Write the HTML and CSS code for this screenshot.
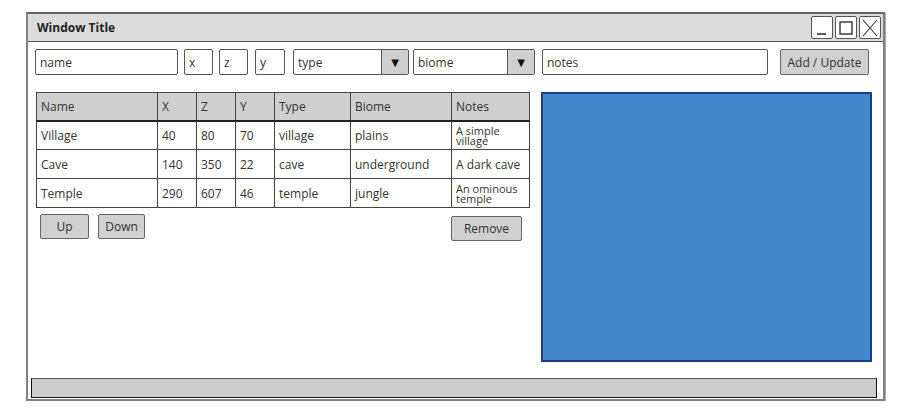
FILE: index.html
```html
<!DOCTYPE html>
<html>
<head>
<meta charset="utf-8">
<link rel="stylesheet" href="styles.css">
</head>
<body>
<div class="window">
  <div class="titlebar">
    <span class="title">Window Title</span>
    <div class="winbtns">
      <span class="wbtn"><svg width="20" height="20" viewBox="0 0 20 20"><path d="M5 16 H14" stroke="#333" stroke-width="1.6" fill="none"/></svg></span>
      <span class="wbtn"><svg width="20" height="20" viewBox="0 0 20 20"><rect x="4" y="4" width="12" height="12" stroke="#333" stroke-width="1.4" fill="none"/></svg></span>
      <span class="wbtn"><svg width="20" height="20" viewBox="0 0 20 20"><path d="M3 2 L17 18 M17 2 L3 18" stroke="#333" stroke-width="1.1" fill="none"/></svg></span>
    </div>
  </div>
  <div class="content">
    <div class="toolbar">
      <div class="field w-name">name</div>
      <div class="field w-small m6">x</div>
      <div class="field w-small m6">z</div>
      <div class="field w-y m7">y</div>
      <div class="select w-type m8"><span class="sel-text">type</span><span class="sel-arrow">▼</span></div>
      <div class="select w-biome m4"><span class="sel-text">biome</span><span class="sel-arrow">▼</span></div>
      <div class="field w-notes m7">notes</div>
      <div class="btn w-add m12">Add / Update</div>
    </div>
    <div class="main">
      <div class="leftcol">
        <table class="grid">
          <colgroup>
            <col style="width:121px"><col style="width:39px"><col style="width:39px"><col style="width:39px"><col style="width:76px"><col style="width:101px"><col style="width:78px">
          </colgroup>
          <thead>
            <tr><th>Name</th><th>X</th><th>Z</th><th>Y</th><th>Type</th><th>Biome</th><th>Notes</th></tr>
          </thead>
          <tbody>
            <tr><td>Village</td><td>40</td><td>80</td><td>70</td><td>village</td><td>plains</td><td class="note">A simple village</td></tr>
            <tr><td>Cave</td><td>140</td><td>350</td><td>22</td><td>cave</td><td>underground</td><td>A dark cave</td></tr>
            <tr><td>Temple</td><td>290</td><td>607</td><td>46</td><td>temple</td><td>jungle</td><td class="note">An ominous temple</td></tr>
          </tbody>
        </table>
        <div class="btnrow">
          <div class="btn w-up">Up</div>
          <div class="btn w-down">Down</div>
          <div class="btn w-remove">Remove</div>
        </div>
      </div>
      <div class="panel"></div>
    </div>
    <div class="statusbar"></div>
  </div>
</div>
</body>
</html>
```
FILE: styles.css
```css
* { box-sizing: border-box; }
html, body { margin: 0; padding: 0; background: #fff; }
body {
  font-family: "Open Sans", "DejaVu Sans", sans-serif;
  font-size: 12px;
  color: #222;
}
.window {
  margin: 12px 0 0 26px;
  width: 859px;
  height: 389px;
  border: 2px solid #808080;
  border-top-color: #666;
  box-shadow: 1px 1px 0 #aaa;
  display: flex;
  flex-direction: column;
}
.titlebar {
  height: 28px;
  background: #dcdcdc;
  border-bottom: 1px solid #555;
  display: flex;
  align-items: center;
  justify-content: space-between;
  padding: 0 2px 0 9px;
}
.title { font-weight: bold; font-size: 12px; color: #222; }
.winbtns { display: flex; gap: 2px; }
.wbtn {
  width: 22px; height: 23px;
  border: 1.5px solid #555;
  border-radius: 2px;
  background: #fff;
  display: flex; align-items: center; justify-content: center;
}
.content {
  flex: 1;
  display: flex;
  flex-direction: column;
  padding: 7px 0 0 7px;
}
.toolbar { display: flex; height: 26px; }
.field {
  height: 26px;
  border: 1.5px solid #555;
  border-radius: 2px;
  background: #fff;
  padding: 4px 0 0 4px;
  font-size: 12px;
  color: #333;
}
.w-name { width: 143px; }
.w-small { width: 29px; }
.w-y { width: 30px; }
.w-notes { width: 226px; }
.m4 { margin-left: 4px; }
.m6 { margin-left: 6px; }
.m7 { margin-left: 7px; }
.m8 { margin-left: 8px; }
.m12 { margin-left: 12px; }
.select {
  height: 26px;
  border: 1.5px solid #555;
  border-radius: 2px;
  background: #fff;
  display: flex;
}
.w-type { width: 116px; }
.w-biome { width: 122px; }
.sel-text { flex: 1; padding: 4px 0 0 4px; color: #333; }
.sel-arrow {
  width: 27px;
  background: #cfcfcf;
  border-left: 1.5px solid #555;
  display: flex; align-items: center; justify-content: center;
  font-size: 10px;
  color: #111;
}
.btn {
  height: 26px;
  border: 1.5px solid #666;
  border-radius: 2px;
  background: #d0d0d0;
  display: flex; align-items: center; justify-content: center;
  font-size: 12px;
  color: #333;
}
.w-add { width: 89px; }
.main { display: flex; margin-top: 17px; padding-left: 1px; gap: 12px; }
.leftcol { width: 493px; }
.grid {
  width: 493px;
  border-collapse: collapse;
  table-layout: fixed;
  border: 1.5px solid #222;
}
.grid th, .grid td {
  border: 1.5px solid #444;
  text-align: left;
  padding: 0 4px;
  font-weight: normal;
  font-size: 12px;
  color: #333;
  overflow: hidden;
  white-space: nowrap;
}
.grid th { background: #cfcfcf; height: 28px; border-bottom: 2px solid #222; }
.grid td { height: 29px; }
.grid td.note { white-space: normal; line-height: 10px; font-size: 11px; padding-top: 1px; }
.btnrow { display: flex; margin-top: 6px; padding-left: 4px; }
.w-up { width: 49px; height: 25px; }
.w-down { width: 47px; height: 25px; margin-left: 9px; }
.w-remove { width: 71px; height: 25px; margin-left: auto; margin-right: 7px; margin-top: 2px; }
.panel {
  width: 331px;
  height: 270px;
  background: #4488cc;
  border: 2px solid #1f3a8a;
}
.statusbar {
  margin: 16px 0 0 -4px;
  width: 846px;
  height: 20px;
  background: #cccccc;
  border: 1.5px solid #111;
  border-top-color: #555;
}
```
